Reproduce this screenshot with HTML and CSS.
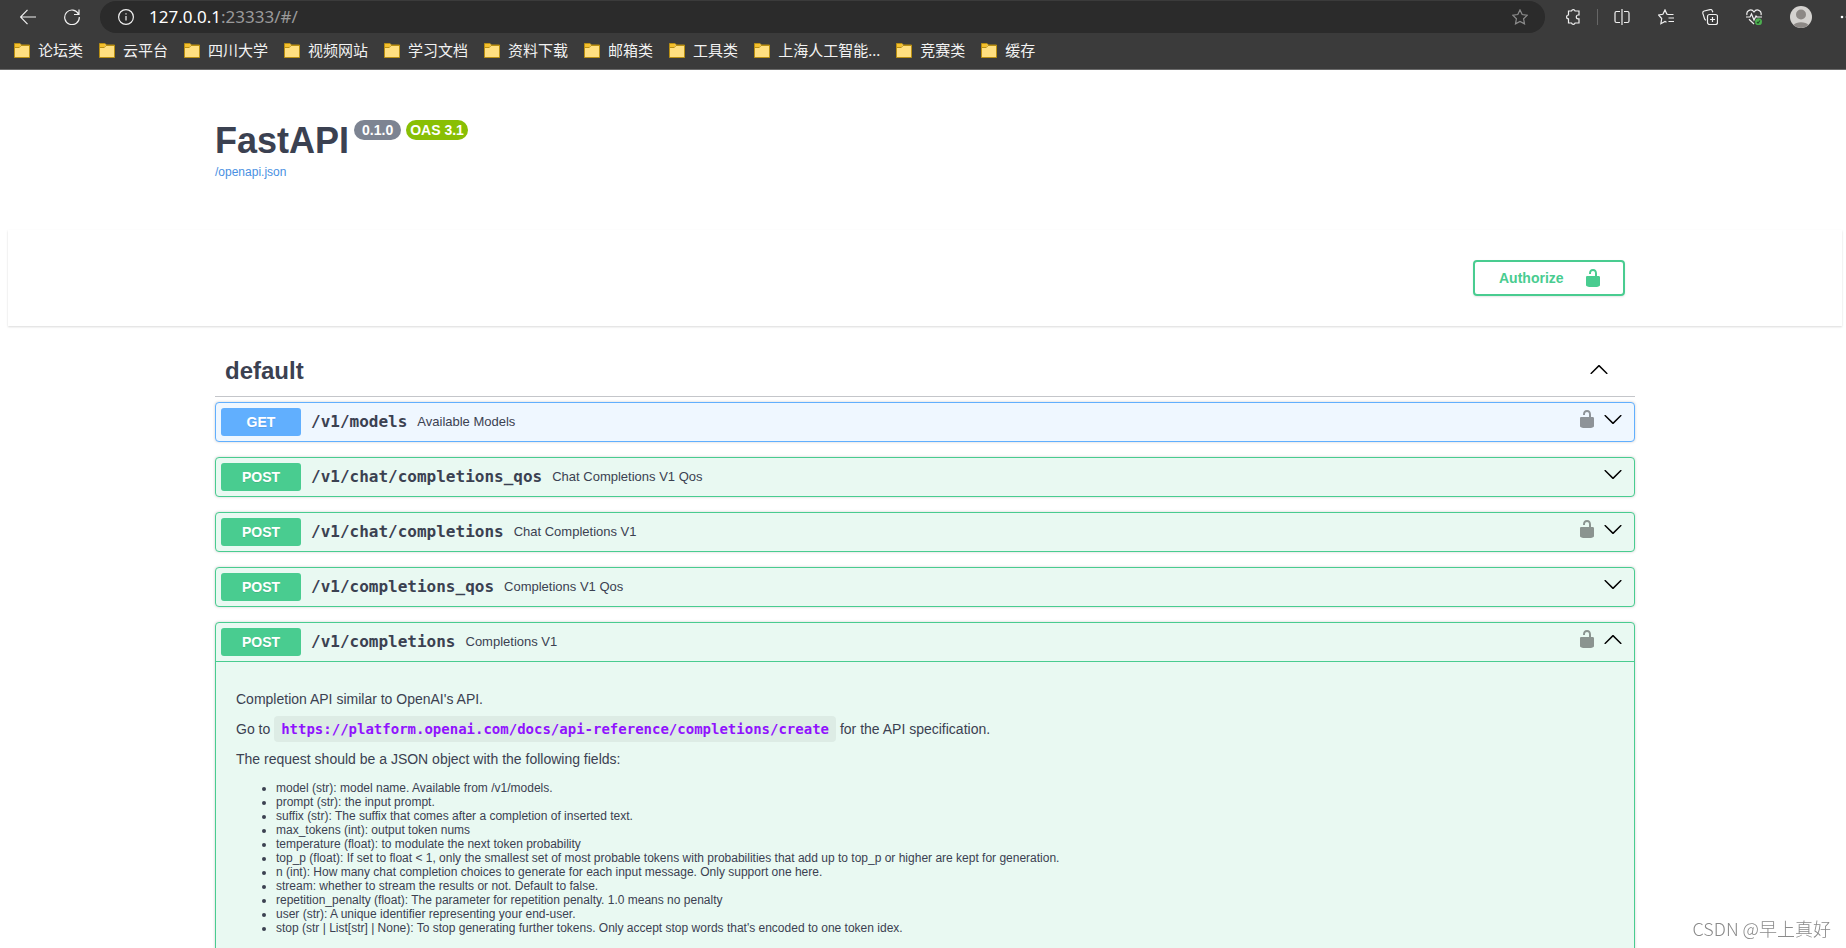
FILE: index.html
```html
<!DOCTYPE html>
<html lang="en">
<head>
    <meta charset="UTF-8">
    <meta name="viewport" content="width=device-width, initial-scale=1.0">
    <title>FastAPI - Swagger UI</title>
    <link rel="stylesheet" href="styles.css">
</head>
<body>
    <!-- shared icons -->
    <svg class="sprite" aria-hidden="true">
        <symbol id="folder" viewBox="0 0 16 16">
            <path d="M.5 1.5h5.5l1.5 1.5h8v12.500H.5z" fill="#ffdf80" stroke="#b98f12"/>
            <path d="M1 2h4.500l1 1.200L5 5H1z" fill="#f5c02c"/>
            <path d="M1 5.500h4.300L7 3.500h8" fill="none" stroke="#b98f12"/>
        </symbol>
        <symbol id="unlocked" viewBox="0 0 20 20">
            <path d="M15.8 8H14V5.6C14 2.703 12.665 1 10 1 7.334 1 6 2.703 6 5.6V6h2v-.801C8 3.754 8.797 3 10 3c1.203 0 2 .754 2 2.199V8H4c-.553 0-1 .646-1 1.199V17c0 .549.428 1.139.951 1.307l1.197.387C5.672 18.861 6.55 19 7.1 19h5.8c.549 0 1.428-.139 1.951-.307l1.196-.387c.524-.167.953-.757.953-1.306V9.199C17 8.646 16.352 8 15.8 8z"/>
        </symbol>
        <symbol id="arrow-up" viewBox="0 0 20 20">
            <path d="M17.418 14.908c.272.268.709.268.979 0s.271-.701 0-.969l-7.908-7.83c-.27-.268-.707-.268-.979 0l-7.908 7.83c-.27.268-.27.701 0 .969.271.268.709.268.979 0L10 7.767l7.418 7.141z"/>
        </symbol>
        <symbol id="arrow-down" viewBox="0 0 20 20">
            <path d="M17.418 6.109c.272-.268.709-.268.979 0s.271.701 0 .969l-7.908 7.83c-.27.268-.707.268-.979 0l-7.908-7.83c-.27-.268-.27-.701 0-.969.271-.268.709-.268.979 0L10 13.25l7.418-7.141z"/>
        </symbol>
    </svg>

    <header class="browser">
        <div class="toolbar">
            <button class="tool" aria-label="Back"><svg viewBox="0 0 16 16"><path d="M16 8H.7M7.500.9L.5 8l7 7.100"/></svg></button>
            <button class="tool" aria-label="Reload"><svg viewBox="0 0 16 16"><path d="M14.600 5.200A7.300 7.300 0 1 0 15.300 8M15 .5v5h-5"/></svg></button>
            <div class="address">
                <svg viewBox="0 0 16 16"><circle cx="8" cy="8" r="7.400"/><path d="M8 7v4.500M8 4.200v1.300"/></svg>
                <span class="url"><b>127.0.0.1</b>:23333/#/</span>
                <button class="tool star" aria-label="Add to favorites"><svg viewBox="0 0 16 16"><path d="M8 .9l2.200 4.600 5.100.7-3.700 3.600.9 5.100L8 12.500l-4.500 2.400.9-5.100L.7 6.200l5.100-.7z"/></svg></button>
            </div>
            <div class="actions">
                <button class="tool" aria-label="Extensions"><svg viewBox="0 0 16 16"><path d="M3.500 2h3a1.900 1.900 0 0 1 3.600 0H14v4h-.8a1.900 1.900 0 0 0 0 3.800h.8v4.200h-3.900a1.900 1.900 0 0 1-3.600 0h-3V9.800a1.900 1.900 0 0 1 0-3.800z"/></svg></button>
                <span class="divider"></span>
                <button class="tool" aria-label="Split screen"><svg viewBox="0 0 16 16"><path d="M6 2.500H2.500A1.500 1.500 0 0 0 1 4v8a1.500 1.500 0 0 0 1.500 1.500H6M10 2.500h3.500A1.500 1.500 0 0 1 15 4v8a1.500 1.500 0 0 1-1.500 1.500H10M8 0v16"/></svg></button>
                <button class="tool" aria-label="Favorites"><svg viewBox="0 0 16 16"><path d="M9.500 5.500H15.500M10.500 9H16M10.500 12.500H16M10 5.500L8.800 5 7 .9 4.900 5.300.5 6l3.200 3.500-.8 5.200L7 12.500l1.500.8"/></svg></button>
                <button class="tool" aria-label="Collections"><svg viewBox="0 0 16 16"><rect x="5.500" y="5.500" width="10" height="10" rx="2"/><path d="M10.500 8v5M8 10.500h5M4 11.200a2 2 0 0 1-1.500-1.600L.8 4.200A2 2 0 0 1 2.200 2L8 .6a2 2 0 0 1 2.400 1.400l.4 1.300"/></svg></button>
                <button class="tool" aria-label="Browser essentials"><svg viewBox="0 0 16 16"><path d="M1 6.200C-.2 1.200 5.500-.7 8 3c2.500-3.700 8.200-1.800 7 3.200M0 8h4l1.500-3 2.500 6 2-4 1 1h5M3 10.200l5 4.800"/><circle class="ok" cx="12.500" cy="12.800" r="3.500"/><path d="M11 13l1 1 2-2.500" class="tick"/></svg></button>
                <button class="tool profile" aria-label="Profile"><svg viewBox="0 0 22 22"><circle cx="11" cy="11" r="11" fill="#d4d2cf"/><circle cx="11" cy="8.500" r="5" fill="#8d8986"/><path d="M3.500 19a8.500 5 0 0 1 15 0 11 11 0 0 1-15 0z" fill="#8d8986"/></svg></button>
                <button class="tool more" aria-label="Settings"><svg viewBox="0 0 16 16"><circle cx="2" cy="8" r="1.300"/><circle cx="7" cy="8" r="1.300"/><circle cx="12" cy="8" r="1.300"/></svg></button>
            </div>
        </div>
        <nav class="bookmarks">
            <a href="#"><svg><use href="#folder"/></svg>论坛类</a>
            <a href="#"><svg><use href="#folder"/></svg>云平台</a>
            <a href="#"><svg><use href="#folder"/></svg>四川大学</a>
            <a href="#"><svg><use href="#folder"/></svg>视频网站</a>
            <a href="#"><svg><use href="#folder"/></svg>学习文档</a>
            <a href="#"><svg><use href="#folder"/></svg>资料下载</a>
            <a href="#"><svg><use href="#folder"/></svg>邮箱类</a>
            <a href="#"><svg><use href="#folder"/></svg>工具类</a>
            <a href="#"><svg><use href="#folder"/></svg>上海人工智能...</a>
            <a href="#"><svg><use href="#folder"/></svg>竞赛类</a>
            <a href="#"><svg><use href="#folder"/></svg>缓存</a>
        </nav>
    </header>

    <main class="swagger-ui">
        <section class="wrapper info">
            <div class="title">
                <h1>FastAPI</h1>
                <span class="version">0.1.0</span>
                <span class="version oas">OAS 3.1</span>
            </div>
            <a class="spec-link" href="#">/openapi.json</a>
        </section>

        <div class="scheme-container">
            <div class="wrapper schemes">
                <button class="authorize"><span>Authorize</span><svg><use href="#unlocked"/></svg></button>
            </div>
        </div>

        <section class="wrapper operations">
            <div class="tag">
                <h2>default</h2>
                <button class="icon" aria-label="Collapse section"><svg><use href="#arrow-up"/></svg></button>
            </div>

            <div class="opblock get">
                <div class="summary">
                    <span class="method">GET</span>
                    <span class="path">/v1/models</span>
                    <span class="desc">Available Models</span>
                    <div class="controls">
                        <button class="icon lock" aria-label="Authorization"><svg><use href="#unlocked"/></svg></button>
                        <button class="icon" aria-label="Expand"><svg><use href="#arrow-down"/></svg></button>
                    </div>
                </div>
            </div>

            <div class="opblock post">
                <div class="summary">
                    <span class="method">POST</span>
                    <span class="path">/v1/chat/completions_qos</span>
                    <span class="desc">Chat Completions V1 Qos</span>
                    <div class="controls">
                        <button class="icon" aria-label="Expand"><svg><use href="#arrow-down"/></svg></button>
                    </div>
                </div>
            </div>

            <div class="opblock post">
                <div class="summary">
                    <span class="method">POST</span>
                    <span class="path">/v1/chat/completions</span>
                    <span class="desc">Chat Completions V1</span>
                    <div class="controls">
                        <button class="icon lock" aria-label="Authorization"><svg><use href="#unlocked"/></svg></button>
                        <button class="icon" aria-label="Expand"><svg><use href="#arrow-down"/></svg></button>
                    </div>
                </div>
            </div>

            <div class="opblock post">
                <div class="summary">
                    <span class="method">POST</span>
                    <span class="path">/v1/completions_qos</span>
                    <span class="desc">Completions V1 Qos</span>
                    <div class="controls">
                        <button class="icon" aria-label="Expand"><svg><use href="#arrow-down"/></svg></button>
                    </div>
                </div>
            </div>

            <div class="opblock post open">
                <div class="summary">
                    <span class="method">POST</span>
                    <span class="path">/v1/completions</span>
                    <span class="desc">Completions V1</span>
                    <div class="controls">
                        <button class="icon lock" aria-label="Authorization"><svg><use href="#unlocked"/></svg></button>
                        <button class="icon" aria-label="Collapse"><svg><use href="#arrow-up"/></svg></button>
                    </div>
                </div>
                <div class="details">
                    <p>Completion API similar to OpenAI's API.</p>
                    <p>Go to <code>https://platform.openai.com/docs/api-reference/completions/create</code> for the API specification.</p>
                    <p>The request should be a JSON object with the following fields:</p>
                    <ul>
                        <li>model (str): model name. Available from /v1/models.</li>
                        <li>prompt (str): the input prompt.</li>
                        <li>suffix (str): The suffix that comes after a completion of inserted text.</li>
                        <li>max_tokens (int): output token nums</li>
                        <li>temperature (float): to modulate the next token probability</li>
                        <li>top_p (float): If set to float &lt; 1, only the smallest set of most probable tokens with probabilities that add up to top_p or higher are kept for generation.</li>
                        <li>n (int): How many chat completion choices to generate for each input message. Only support one here.</li>
                        <li>stream: whether to stream the results or not. Default to false.</li>
                        <li>repetition_penalty (float): The parameter for repetition penalty. 1.0 means no penalty</li>
                        <li>user (str): A unique identifier representing your end-user.</li>
                        <li>stop (str | List[str] | None): To stop generating further tokens. Only accept stop words that's encoded to one token idex.</li>
                    </ul>
                </div>
            </div>
        </section>
    </main>

    <div class="watermark">CSDN @早上真好</div>
</body>
</html>
```
FILE: styles.css
```css
* {
    box-sizing: border-box;
}

body {
    margin: 0;
    height: 100vh;
    display: flex;
    flex-direction: column;
    overflow: hidden;
    background-color: #fff;
    color: #3b4151;
    font-family: "Liberation Sans", Arial, sans-serif;
}

button {
    padding: 0;
    border: none;
    background: none;
    cursor: pointer;
}

a {
    text-decoration: none;
}

svg {
    display: block;
    width: 20px;
    height: 20px;
}

.sprite {
    position: absolute;
    width: 0;
    height: 0;
}

/* Browser bars */
.browser {
    flex: none;
    background-color: #3b3b3b;
    border-bottom: 1px solid #6a6a6a;
    overflow: hidden;
}

.toolbar {
    display: flex;
    align-items: center;
    gap: 28px;
    padding: 1px 0 0 20px;
}

.toolbar svg {
    width: 16px;
    height: 16px;
    fill: none;
    stroke: #f0f0f0;
    stroke-width: 1.2;
}

.tool {
    flex: none;
}

.address {
    flex: 1;
    display: flex;
    align-items: center;
    gap: 15px;
    height: 32px;
    margin-left: -8px;
    padding: 0 17px 0 18px;
    border-radius: 16px;
    background-color: #2b2b2b;
}

.url {
    flex: 1;
    color: #9a9a9a;
    font-family: "Noto Sans", sans-serif;
    font-size: 17px;
    line-height: 20px;
}

.url b {
    color: #fff;
    font-weight: normal;
}

.toolbar .star svg {
    stroke: #8c8c8c;
}

.actions {
    display: flex;
    align-items: center;
    gap: 28px;
    margin-left: -8px;
    margin-right: -10px;
}

.divider {
    width: 1px;
    height: 16px;
    margin: 0 -12px;
    background-color: #666;
}

.toolbar .ok {
    fill: #4caf50;
    stroke: none;
}

.toolbar .tick {
    stroke: #244d26;
}

.toolbar .profile svg {
    width: 22px;
    height: 22px;
    stroke: none;
}

.toolbar .more svg {
    fill: #fff;
    stroke: none;
}

.bookmarks {
    display: flex;
    gap: 16px;
    padding: 7px 14px 9px;
}

.bookmarks a {
    display: flex;
    align-items: center;
    gap: 8px;
    color: #f2f2f2;
    font-family: "Noto Sans", "Noto Sans CJK SC", sans-serif;
    font-size: 15px;
    line-height: 20px;
    white-space: nowrap;
}

.bookmarks svg {
    width: 16px;
    height: 16px;
}

/* API docs */
.swagger-ui {
    flex: 1;
    min-height: 0;
    overflow: hidden;
    padding: 0 4px 0 8px;
}

.wrapper {
    max-width: 1460px;
    margin: 0 auto;
    padding: 0 20px;
}

.info {
    padding-top: 50px;
    padding-bottom: 51px;
}

.title {
    display: flex;
    align-items: flex-start;
    gap: 5px;
}

h1 {
    margin: 0;
    font-size: 36px;
    line-height: 42px;
}

.version {
    padding: 2px 8px;
    border-radius: 10px;
    background-color: #7d8492;
    color: #fff;
    font-size: 14px;
    font-weight: bold;
    line-height: 16px;
}

.version.oas {
    padding: 2px 4px;
    background-color: #89bf04;
}

.spec-link {
    display: block;
    width: fit-content;
    margin-top: 3px;
    color: #4990e2;
    font-size: 12px;
    line-height: 14px;
}

.scheme-container {
    padding: 30px 0;
    background-color: #fff;
    box-shadow: 0 1px 2px rgba(0, 0, 0, 0.15);
}

.schemes {
    display: flex;
    justify-content: flex-end;
    padding-right: 30px;
}

.authorize {
    display: flex;
    align-items: center;
    justify-content: space-between;
    width: 152px;
    height: 36px;
    padding: 0 20px 0 24px;
    border: 2px solid #49cc90;
    border-radius: 4px;
    box-shadow: 0 1px 2px rgba(0, 0, 0, 0.1);
    color: #49cc90;
    font-family: inherit;
    font-size: 14px;
    font-weight: bold;
}

.authorize svg {
    fill: #49cc90;
}

.operations {
    padding-top: 20px;
}

.tag {
    display: flex;
    align-items: center;
    justify-content: space-between;
    height: 51px;
    margin-bottom: 5px;
    padding: 0 26px 0 10px;
    border-bottom: 1px solid rgba(59, 65, 81, 0.3);
}

.tag .icon {
    padding-bottom: 4px;
}

h2 {
    margin: 0;
    font-size: 24px;
    line-height: 28px;
}

.opblock {
    margin-bottom: 15px;
    border: 1px solid;
    border-radius: 4px;
    box-shadow: 0 0 3px rgba(0, 0, 0, 0.19);
}

.get {
    border-color: #61affe;
    background-color: #eff7ff;
}

.post {
    border-color: #49cc90;
    background-color: #e9f9f2;
}

.summary {
    display: flex;
    align-items: center;
    gap: 10px;
    padding: 5px;
}

.open .summary {
    border-bottom: 1px solid #49cc90;
}

.method {
    width: 80px;
    padding: 6px 0;
    border-radius: 3px;
    color: #fff;
    font-size: 14px;
    font-weight: bold;
    line-height: 16px;
    text-align: center;
    text-shadow: 0 1px 0 rgba(0, 0, 0, 0.1);
}

.get .method {
    background-color: #61affe;
}

.post .method {
    background-color: #49cc90;
}

.path {
    font-family: "DejaVu Sans Mono", monospace;
    font-size: 16px;
    font-weight: bold;
    line-height: 20px;
}

.desc {
    flex: 1;
    font-size: 13px;
    line-height: 16px;
}

.controls {
    display: flex;
    gap: 6px;
    padding: 0 6px 6px 0;
}

.icon svg {
    fill: #000;
}

.lock svg {
    opacity: 0.4;
}

.details {
    padding: 15px 20px 40px;
}

.details p {
    margin: 14px 0;
    font-size: 14px;
    line-height: 16px;
}

.details code {
    padding: 5px 7px;
    border-radius: 4px;
    background-color: rgba(0, 0, 0, 0.05);
    color: #9012fe;
    font-family: "DejaVu Sans Mono", monospace;
    font-weight: bold;
}

.details ul {
    margin: 14px 0;
    padding-left: 40px;
    font-size: 12px;
    line-height: 14px;
}

.watermark {
    position: fixed;
    right: 15px;
    bottom: 8px;
    color: #8a8a8a;
    font-family: "Noto Sans CJK SC", sans-serif;
    font-size: 18px;
    font-weight: 300;
    line-height: 24px;
}
```
